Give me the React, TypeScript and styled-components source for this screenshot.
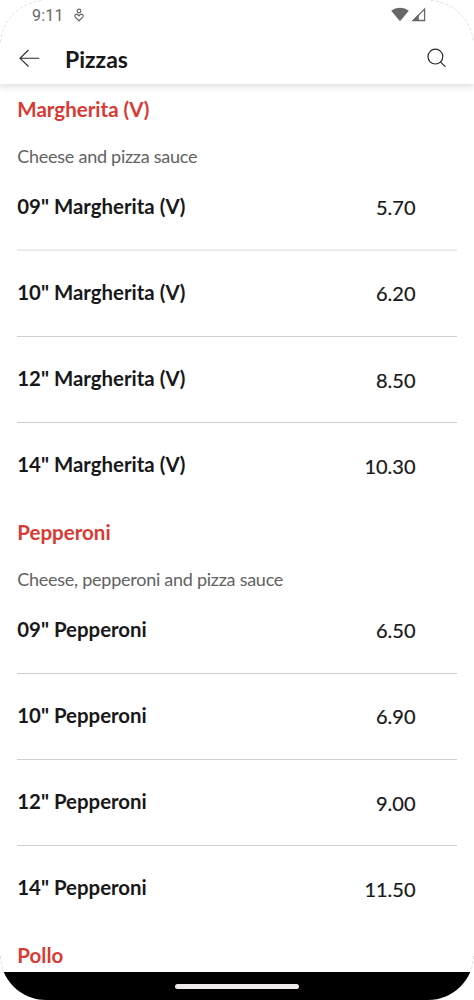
import React from 'react';
import styled, { createGlobalStyle } from 'styled-components';

const GlobalStyle = createGlobalStyle`
  * { box-sizing: border-box; }
  body { margin: 0; background: #fff; }
`;

const Screen = styled.div`
  position: relative;
  display: flex;
  flex-direction: column;
  width: 474px;
  height: 1000px;
  overflow: hidden;
  border-radius: 46px;
  background: #fff;
  color: #18181a;
  font-family: Lato, 'Liberation Sans', sans-serif;
`;

const StatusBar = styled.div`
  display: flex;
  align-items: center;
  flex: none;
  height: 30px;
  padding: 0 48.5px 0 32px;
  color: #686868;
`;

const Clock = styled.span`
  width: 41px;
  padding-top: 1px;
  font: 400 16px/30px Roboto, sans-serif;
  letter-spacing: 0.2px;
`;

const Signals = styled.div`
  display: flex;
  gap: 2px;
  margin: -1px 0 0 auto;
`;

const Header = styled.header`
  display: flex;
  align-items: center;
  flex: none;
  height: 54px;
  padding: 2px 27.5px 0 18px;
  box-shadow: 0 2px 7px 1px rgba(0, 0, 0, 0.12);
  clip-path: inset(0 0 -12px 0);
`;

const Heading = styled.h1`
  flex: 1;
  margin: 2px 0 0 24px;
  font-size: 23px;
  line-height: 30px;
  font-weight: 700;
`;

const Menu = styled.main`
  flex: 1;
  min-height: 0;
  overflow: hidden;
  padding: 2.2px 17px 0 17.3px;
`;

const Group = styled.section`
  height: 423px;
`;

const GroupHead = styled.div`
  height: 78.2px;
  padding-top: 7.4px;
`;

const GroupTitle = styled.h2`
  margin: 0 0 17px;
  color: #d83a34;
  font-size: 20.5px;
  line-height: 30px;
  font-weight: 700;
`;

const Description = styled.p`
  margin: 0;
  color: #626262;
  font-size: 18px;
  line-height: 30px;
  letter-spacing: -0.26px;
  white-space: nowrap;
`;

const Row = styled.div<{ $faint?: boolean }>`
  display: flex;
  justify-content: space-between;
  height: 86.2px;
  padding: 26.4px 41.5px 0 0;
  border-bottom: ${({ $faint }) => ($faint ? '2px solid #ebebeb' : '1px solid #cfcfcf')};
  &:last-child { border-bottom: 0; }
`;

const ItemName = styled.span`
  font-size: 20.4px;
  line-height: 30px;
  font-weight: 700;
`;

const Price = styled.span`
  margin-top: 1.4px;
  font-size: 20px;
  line-height: 30px;
  -webkit-text-stroke: 0.2px currentColor;
`;

const NavBar = styled.footer`
  display: flex;
  justify-content: center;
  flex: none;
  height: 28px;
  padding-top: 12px;
  background: #000;
`;

const Handle = styled.div`
  width: 124px;
  height: 4.5px;
  border-radius: 3px;
  background: #eeeaec;
`;

const Outline = styled.svg`
  position: absolute;
  inset: 0;
  pointer-events: none;
`;

interface MenuGroup {
  name: string;
  description: string;
  prices: [string, string][];
}

const groups: MenuGroup[] = [
  {
    name: 'Margherita (V)',
    description: 'Cheese and pizza sauce',
    prices: [['09', '5.70'], ['10', '6.20'], ['12', '8.50'], ['14', '10.30']],
  },
  {
    name: 'Pepperoni',
    description: 'Cheese, pepperoni and pizza sauce',
    prices: [['09', '6.50'], ['10', '6.90'], ['12', '9.00'], ['14', '11.50']],
  },
  { name: 'Pollo', description: '', prices: [] },
];

const HeartPersonIcon = () => (
  <svg width="12" height="14" viewBox="0 0 12 14" fill="none" stroke="currentColor" strokeWidth="1.2">
    <circle cx="6" cy="3" r="1.8" />
    <path d="M6 12.8 2.2 9.2C.7 7.4 3.2 5.2 5 6.8L6 7.8 7 6.8C8.8 5.2 11.3 7.4 9.8 9.2Z" />
  </svg>
);

const WifiIcon = () => (
  <svg width="18" height="15" viewBox="0 0 18 15" fill="currentColor">
    <path d="M9 14.3.2 3.7C5.3-.4 12.7-.4 17.8 3.7Z" />
  </svg>
);

const CellIcon = () => (
  <svg width="15" height="15" viewBox="0 0 15 15">
    <path d="M13.6 2V13.5H2.1Z" fill="none" stroke="currentColor" strokeWidth="1.3" />
    <path d="M1 14 7.8 7.2V14Z" fill="currentColor" />
  </svg>
);

const BackIcon = () => (
  <svg width="23" height="20" viewBox="0 0 23 20" fill="none" stroke="#29292b" strokeWidth="1.1">
    <path d="M10.5 2 2 10.3l8.5 8.2M2 10.3h19.3" />
  </svg>
);

const SearchIcon = () => (
  <svg width="20" height="20" viewBox="0 0 20 20" fill="none" stroke="#29292b" strokeWidth="1.2">
    <circle cx="8.4" cy="8.6" r="7.4" />
    <path d="m13.4 13.8 5 5" />
  </svg>
);

export default function App() {
  return (
    <>
      <GlobalStyle />
      <Screen>
        <StatusBar>
          <Clock>9:11</Clock>
          <HeartPersonIcon />
          <Signals>
            <WifiIcon />
            <CellIcon />
          </Signals>
        </StatusBar>
        <Header>
          <BackIcon />
          <Heading>Pizzas</Heading>
          <SearchIcon />
        </Header>
        <Menu>
          {groups.map(({ name, description, prices }, groupIndex) => (
            <Group key={name}>
              <GroupHead>
                <GroupTitle>{name}</GroupTitle>
                <Description>{description}</Description>
              </GroupHead>
              {prices.map(([size, price], rowIndex) => (
                <Row key={size} $faint={groupIndex === 0 && rowIndex === 0}>
                  <ItemName>{`${size}" ${name}`}</ItemName>
                  <Price>{price}</Price>
                </Row>
              ))}
            </Group>
          ))}
        </Menu>
        <NavBar>
          <Handle />
        </NavBar>
        <Outline width="474" height="1000" fill="none" stroke="#c4c4c4" strokeWidth="0.8" strokeDasharray="3 2">
          <path d="M.4 42A45.6 45.6 0 0 1 43 .4M431 .4A45.6 45.6 0 0 1 473.6 42M.4 956Q.8 965 3.8 972M473.6 956Q473.2 965 470.2 972" />
        </Outline>
      </Screen>
    </>
  );
}
